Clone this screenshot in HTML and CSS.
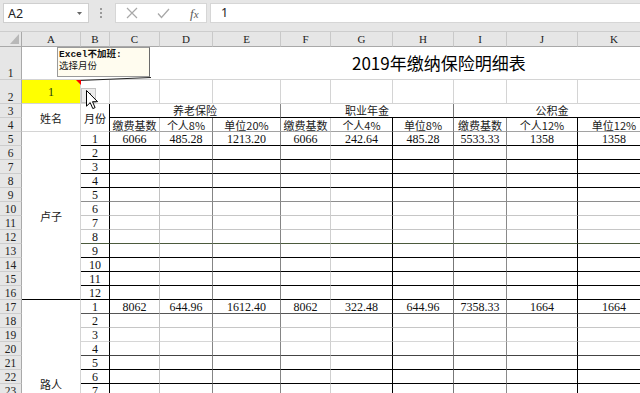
FILE: index.html
```html
<!DOCTYPE html>
<html lang="zh-CN">
<head>
<meta charset="utf-8">
<title>2019年缴纳保险明细表</title>
<link rel="stylesheet" href="styles.css">
</head>
<body>
<div class="fbar">
  <div class="namebox">
    <span class="nb-text">A2</span>
    <svg class="nb-caret" width="5" height="3" viewBox="0 0 5 3"><path d="M0 0H5L2.5 3Z" fill="#666"/></svg>
  </div>
  <div class="grip"><i></i><i></i><i></i></div>
  <div class="fbtns">
    <svg class="ico-x" width="12" height="12" viewBox="0 0 12 12"><path d="M1 1L11 11M11 1L1 11" stroke="#a8a8a8" stroke-width="1.2" fill="none"/></svg>
    <svg class="ico-ok" width="13" height="11" viewBox="0 0 13 11"><path d="M1 5.5L4.5 9.5L12 1" stroke="#a8a8a8" stroke-width="1.3" fill="none"/></svg>
    <span class="fx">f<span class="fx-x">x</span></span>
  </div>
  <div class="finput">1</div>
</div>

<div class="sheet">
  <table class="grid">
    <colgroup>
      <col class="w-rh"><col class="w-a"><col class="w-b"><col class="w-c"><col class="w-d"><col class="w-e">
      <col class="w-f"><col class="w-g"><col class="w-h"><col class="w-i"><col class="w-j"><col class="w-k">
    </colgroup>
    <thead>
      <tr class="r-hd">
        <th class="corner"></th><th>A</th><th>B</th><th>C</th><th>D</th><th>E</th><th>F</th><th>G</th><th>H</th><th>I</th><th>J</th><th>K</th>
      </tr>
    </thead>
    <tbody>
      <tr class="r1"><th class="rh">1</th><td colspan="11" class="title">2019年缴纳保险明细表</td></tr>
      <tr class="r2"><th class="rh">2</th><td class="sel">1</td><td></td><td></td><td></td><td></td><td></td><td></td><td></td><td></td><td></td><td></td></tr>
      <tr class="r3"><th class="rh">3</th><td rowspan="2" class="cj">姓名</td><td rowspan="2" class="cj mb">月份</td><td colspan="3" class="cj grp g1">养老保险</td><td colspan="3" class="cj grp g2">职业年金</td><td colspan="3" class="cj grp">公积金</td></tr>
      <tr class="dr r4"><th class="rh">4</th><td class="cj">缴费基数</td><td class="cj">个人8%</td><td class="cj">单位20%</td><td class="cj">缴费基数</td><td class="cj">个人4%</td><td class="cj">单位8%</td><td class="cj">缴费基数</td><td class="cj">个人12%</td><td class="cj">单位12%</td></tr>

      <tr class="dr bk"><th class="rh">5</th><td rowspan="12" class="name cj nb">卢子</td><td>1</td><td>6066</td><td>485.28</td><td>1213.20</td><td>6066</td><td>242.64</td><td>485.28</td><td>5533.33</td><td>1358</td><td>1358</td></tr>
      <tr class="dr bk"><th class="rh">6</th><td>2</td><td></td><td></td><td></td><td></td><td></td><td></td><td></td><td></td><td></td></tr>
      <tr class="dr bk"><th class="rh">7</th><td>3</td><td></td><td></td><td></td><td></td><td></td><td></td><td></td><td></td><td></td></tr>
      <tr class="dr bk"><th class="rh">8</th><td>4</td><td></td><td></td><td></td><td></td><td></td><td></td><td></td><td></td><td></td></tr>
      <tr class="dr g9"><th class="rh">9</th><td>5</td><td></td><td></td><td></td><td></td><td></td><td></td><td></td><td></td><td></td></tr>
      <tr class="dr lt"><th class="rh">10</th><td>6</td><td></td><td></td><td></td><td></td><td></td><td></td><td></td><td></td><td></td></tr>
      <tr class="dr lt"><th class="rh">11</th><td>7</td><td></td><td></td><td></td><td></td><td></td><td></td><td></td><td></td><td></td></tr>
      <tr class="dr dg"><th class="rh">12</th><td>8</td><td></td><td></td><td></td><td></td><td></td><td></td><td></td><td></td><td></td></tr>
      <tr class="dr bk"><th class="rh">13</th><td>9</td><td></td><td></td><td></td><td></td><td></td><td></td><td></td><td></td><td></td></tr>
      <tr class="dr bk"><th class="rh">14</th><td>10</td><td></td><td></td><td></td><td></td><td></td><td></td><td></td><td></td><td></td></tr>
      <tr class="dr bk"><th class="rh">15</th><td>11</td><td></td><td></td><td></td><td></td><td></td><td></td><td></td><td></td><td></td></tr>
      <tr class="dr bk"><th class="rh">16</th><td>12</td><td></td><td></td><td></td><td></td><td></td><td></td><td></td><td></td><td></td></tr>

      <tr class="dr g5"><th class="rh">17</th><td rowspan="12" class="name cj">路人</td><td>1</td><td>8062</td><td>644.96</td><td>1612.40</td><td>8062</td><td>322.48</td><td>644.96</td><td>7358.33</td><td>1664</td><td>1664</td></tr>
      <tr class="dr lt"><th class="rh">18</th><td>2</td><td></td><td></td><td></td><td></td><td></td><td></td><td></td><td></td><td></td></tr>
      <tr class="dr lt2"><th class="rh">19</th><td>3</td><td></td><td></td><td></td><td></td><td></td><td></td><td></td><td></td><td></td></tr>
      <tr class="dr g4"><th class="rh">20</th><td>4</td><td></td><td></td><td></td><td></td><td></td><td></td><td></td><td></td><td></td></tr>
      <tr class="dr bk"><th class="rh">21</th><td>5</td><td></td><td></td><td></td><td></td><td></td><td></td><td></td><td></td><td></td></tr>
      <tr class="dr bk"><th class="rh">22</th><td>6</td><td></td><td></td><td></td><td></td><td></td><td></td><td></td><td></td><td></td></tr>
      <tr class="dr bk"><th class="rh">23</th><td>7</td><td></td><td></td><td></td><td></td><td></td><td></td><td></td><td></td><td></td></tr>
      <tr class="dr bk"><th class="rh">24</th><td>8</td><td></td><td></td><td></td><td></td><td></td><td></td><td></td><td></td><td></td></tr>
      <tr class="dr bk"><th class="rh">25</th><td>9</td><td></td><td></td><td></td><td></td><td></td><td></td><td></td><td></td><td></td></tr>
      <tr class="dr bk"><th class="rh">26</th><td>10</td><td></td><td></td><td></td><td></td><td></td><td></td><td></td><td></td><td></td></tr>
      <tr class="dr bk"><th class="rh">27</th><td>11</td><td></td><td></td><td></td><td></td><td></td><td></td><td></td><td></td><td></td></tr>
      <tr class="dr bk"><th class="rh">28</th><td>12</td><td></td><td></td><td></td><td></td><td></td><td></td><td></td><td></td><td></td></tr>
    </tbody>
  </table>

  <div class="comment">
    <div class="cm-title">Excel不加班:</div>
    <div class="cm-body">选择月份</div>
  </div>
  <svg class="connector" width="80" height="6" viewBox="0 0 80 6"><path d="M1 4.5L73 1.5" stroke="#222" stroke-width="1" fill="none"/></svg>
  <div class="flag"></div>
  <div class="dd"><svg width="5" height="3" viewBox="0 0 5 3"><path d="M0 0H5L2.5 3Z" fill="#444"/></svg></div>
  <svg class="cursor" width="13" height="20" viewBox="0 0 13 20"><path d="M0.5 0.5V16.2L4.2 12.6L6.8 18.6L9.1 17.6L6.5 11.7H11.6Z" fill="#fff" stroke="#000" stroke-width="1" stroke-linejoin="miter"/></svg>
</div>
</body>
</html>
```

FILE: styles.css
```css
html, body {
  margin: 0;
  padding: 0;
  overflow: hidden;
  background: #fff;
}
body {
  width: 640px;
  height: 393px;
  font-family: "Liberation Serif", "Noto Sans CJK SC", serif;
}

/* ---------- formula bar ---------- */
.fbar {
  box-sizing: border-box;
  height: 32px;
  background: #e6e6e6;
  border-bottom: 1px solid #cdcdcd;
  display: flex;
  align-items: flex-start;
  padding: 3px 0 0 3px;
}
.namebox {
  box-sizing: border-box;
  width: 86px;
  height: 20px;
  background: #fff;
  border: 1px solid #cfcfcf;
  display: flex;
  align-items: center;
  justify-content: space-between;
  padding: 0 6px 0 4px;
}
.nb-text {
  font-family: "Noto Sans", "Open Sans", sans-serif;
  font-size: 12.5px;
  color: #222;
}
.grip {
  margin-left: 10px;
  width: 3px;
  height: 20px;
  display: flex;
  flex-direction: column;
  align-items: center;
  justify-content: center;
  gap: 2px;
}
.grip i {
  display: block;
  width: 2px;
  height: 2px;
  background: #9a9a9a;
}
.fbtns {
  box-sizing: border-box;
  margin-left: 13px;
  width: 92px;
  height: 20px;
  background: #fff;
  border: 1px solid #d6d6d6;
  display: flex;
  align-items: center;
  padding-left: 10px;
}
.ico-ok { margin-left: 19px; }
.fx {
  margin-left: 20px;
  font-family: "Liberation Serif", serif;
  font-style: italic;
  font-size: 13px;
  color: #5a5a5a;
  line-height: 1;
}
.fx-x { font-size: 11px; }
.finput {
  box-sizing: border-box;
  margin-left: 3px;
  flex: 1;
  height: 20px;
  background: #fff;
  border: 1px solid #d6d6d6;
  border-right: 0;
  padding-left: 10px;
  font-family: "Noto Sans", "Open Sans", sans-serif;
  font-size: 12.5px;
  line-height: 18px;
  color: #222;
}

/* ---------- sheet ---------- */
.sheet {
  position: relative;
}
.grid {
  table-layout: fixed;
  border-collapse: separate;
  border-spacing: 0;
  width: 651px;
}
.w-rh { width: 22px; }
.w-a { width: 59px; }
.w-b { width: 29px; }
.w-c { width: 50px; }
.w-d { width: 53px; }
.w-e { width: 68px; }
.w-f { width: 50px; }
.w-g { width: 62px; }
.w-h { width: 61px; }
.w-i { width: 53px; }
.w-j { width: 71px; }
.w-k { width: 73px; }

.grid th,
.grid td {
  box-sizing: border-box;
  padding: 0;
  text-align: center;
  white-space: nowrap;
}
.grid td {
  border-right: 1px solid #d4d4d4;
  border-bottom: 1px solid #d4d4d4;
  vertical-align: middle;
  font-size: 12px;
  line-height: 12px;
  color: #111;
}
.grid .cj {
  font-family: "Noto Sans CJK SC", sans-serif;
  font-size: 11px;
  line-height: 12px;
  color: #1a1a1a;
}
.r3 .grp {
  vertical-align: top;
  line-height: 12px;
}

/* headers */
.r-hd th {
  height: 15px;
  background: #e6e6e6;
  border-right: 1px solid #c9c9c9;
  border-bottom: 1px solid #a9a9a9;
  font-weight: normal;
  font-size: 11px;
  line-height: 13px;
  color: #222;
  vertical-align: bottom;
}
.r-hd .corner {
  position: relative;
  border-right-color: #a9a9a9;
}
.r-hd .corner::after {
  content: "";
  position: absolute;
  right: 2px;
  bottom: 2px;
  width: 9px;
  height: 10px;
  background: #b8b8b8;
  clip-path: polygon(100% 0, 100% 100%, 0 100%);
}
.rh {
  background: #e6e6e6;
  border-right: 1px solid #a9a9a9;
  border-bottom: 1px solid #cdcdcd;
  font-weight: normal;
  font-size: 11.5px;
  line-height: 12px;
  color: #222;
  vertical-align: bottom;
}

/* row heights */
.r1 > * { height: 33px; }
.r2 > * { height: 24px; }
.r3 > * { height: 14px; }
.r4 > * { height: 15px; }
.dr > * { height: 14px; }

.grid .title {
  text-align: left;
  padding-left: 330px;
  font-family: "Noto Sans CJK SC", sans-serif;
  font-size: 17px;
  line-height: 20px;
  color: #000;
}
.grid .sel {
  background: #ffff00;
  color: #1b3d12;
}

/* row 3 group headers */
.r3 .mb { border-right-color: #000; }
.r3 .grp { border-bottom-color: #000; }
.r3 .g1 { border-right-color: #858585; }
.r3 .g2 { border-right-color: #777; }
.r4 td { border-bottom-color: #a2a2a2; }
.r4 .cj { vertical-align: bottom; }

/* column borders in body rows (counted from the right so merged A cells do not shift them) */
.dr td:nth-last-child(10) { border-right-color: #000; }
.dr td:nth-last-child(9) { border-right-color: #c2c2c2; }
.dr td:nth-last-child(8) { border-right-color: #858585; }
.dr td:nth-last-child(7) { border-right-color: #858585; }
.dr td:nth-last-child(6) { border-right-color: #cfcfcf; }
.dr td:nth-last-child(5) { border-right-color: #000; }
.dr td:nth-last-child(4) { border-right-color: #777; }
.dr td:nth-last-child(3) { border-right-color: #8a8a8a; }
.dr td:nth-last-child(2) { border-right-color: #000; }

/* row borders */
.bk td:not(.name) { border-bottom-color: #000; }
.g9 td:not(.name) { border-bottom-color: #8e8e8e; }
.lt td:not(.name) { border-bottom-color: #c6c6c6; }
.lt2 td:not(.name) { border-bottom-color: #d6d6d6; }
.dg td:not(.name) { border-bottom-color: #4b5a3c; }
.g5 td:not(.name) { border-bottom-color: #555; }
.g4 td:not(.name) { border-bottom-color: #444; }
.name { border-right-color: #d4d4d4; }
.name.nb { border-bottom-color: #000; }

/* ---------- overlays ---------- */
.comment {
  position: absolute;
  left: 57px;
  top: 15px;
  width: 93px;
  height: 30px;
  box-sizing: border-box;
  background: #fffcef;
  border: 1px solid #9a9a9a;
  border-right-color: #6a6a6a;
  padding: 1px 0 0 1px;
  font-family: "Liberation Mono", "Noto Sans CJK SC", monospace;
  font-size: 9.5px;
  line-height: 12px;
  color: #111;
}
.cm-title { font-weight: bold; }
.connector {
  position: absolute;
  left: 78px;
  top: 44px;
}
.flag {
  position: absolute;
  left: 76px;
  top: 48px;
  width: 5px;
  height: 5px;
  background: #f00;
  clip-path: polygon(0 0, 100% 0, 100% 100%);
}
.dd {
  position: absolute;
  left: 81px;
  top: 56px;
  width: 15px;
  height: 15px;
  box-sizing: border-box;
  background: #ececec;
  border: 1px solid #c4c4c4;
  display: flex;
  justify-content: center;
  align-items: flex-start;
  padding-top: 4px;
}
.dd svg { display: block; }
.cursor {
  position: absolute;
  left: 86px;
  top: 58px;
}
```
